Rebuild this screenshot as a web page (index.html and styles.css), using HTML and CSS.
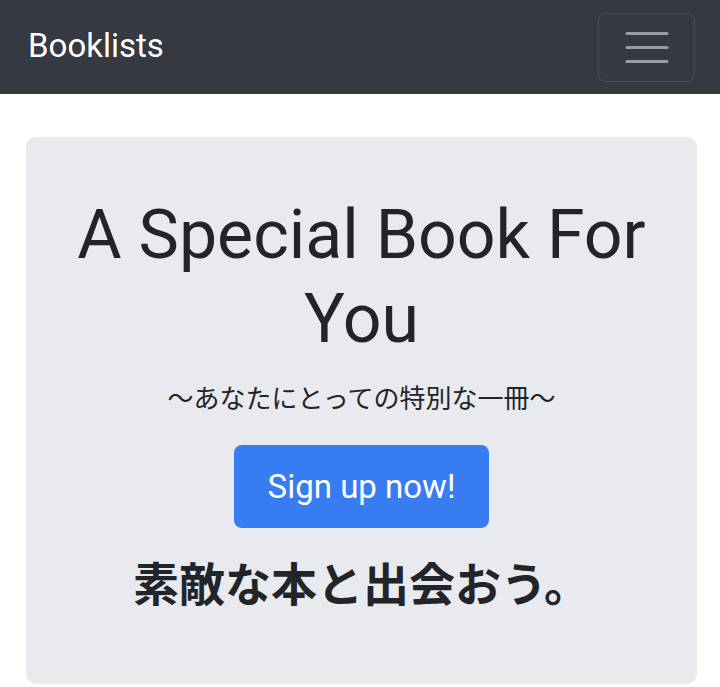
FILE: index.html
```html
<!DOCTYPE html>
<html lang="ja">
<head>
<meta charset="utf-8">
<title>Booklists</title>
<link rel="stylesheet" href="styles.css">
</head>
<body>
<nav class="navbar">
  <a class="brand" href="#">Booklists</a>
  <button class="toggler" type="button" aria-label="Toggle navigation">
    <svg width="44" height="32" viewBox="0 0 44 32" aria-hidden="true">
      <path d="M2 2.5H42M2 16.5H42M2 30.5H42" stroke="rgba(255,255,255,0.5)" stroke-width="3.2" stroke-linecap="round" fill="none"/>
    </svg>
  </button>
</nav>
<main class="jumbotron">
  <h1 class="title">A Special Book For You</h1>
  <p class="lead">〜あなたにとっての特別な一冊〜</p>
  <a class="btn-primary" href="#">Sign up now!</a>
  <h2 class="tagline">素敵な本と出会おう。</h2>
</main>
</body>
</html>
```
FILE: styles.css
```css
html, body {
  margin: 0;
  padding: 0;
  background: #ffffff;
}
body {
  font-family: Roboto, "Noto Sans CJK JP", sans-serif;
  color: #212529;
}
.navbar {
  height: 94px;
  background: #343a40;
  display: flex;
  align-items: center;
  justify-content: space-between;
  padding: 0 25px 0 28px;
  box-sizing: border-box;
}
.brand {
  color: #ffffff;
  text-decoration: none;
  font-size: 33px;
  line-height: 40px;
  margin-top: -2px;
}
.toggler {
  width: 97px;
  height: 69px;
  margin-top: 0;
  border: 1.5px solid rgba(255,255,255,0.1);
  border-radius: 8px;
  background: transparent;
  padding: 0;
  display: flex;
  align-items: center;
  justify-content: center;
}
.toggler svg {
  display: block;
  margin-top: -1px;
}
.jumbotron {
  margin: 43px 23px 3px 26px;
  background: #e9eaee;
  border-radius: 10px;
  padding: 56px 32px 76px;
  display: flex;
  flex-direction: column;
  align-items: center;
  text-align: center;
}
.title {
  font-family: Roboto, sans-serif;
  font-weight: 400;
  font-size: 68px;
  line-height: 84px;
  margin: 0;
  color: #212529;
}
.lead {
  font-family: "Noto Sans CJK JP", sans-serif;
  font-weight: 400;
  font-size: 26px;
  line-height: 42px;
  margin: 15px 0 0;
  color: #212529;
}
.btn-primary {
  margin-top: 27px;
  display: inline-block;
  background: #377cf0;
  color: #ffffff;
  text-decoration: none;
  font-family: Roboto, sans-serif;
  font-size: 33px;
  line-height: 83px;
  height: 83px;
  padding: 0 34px;
  border-radius: 8px;
}
.tagline {
  font-family: "Noto Sans CJK JP", sans-serif;
  font-weight: 700;
  font-size: 46px;
  line-height: 54px;
  margin: 26px 0 0;
  color: #212529;
}
```
